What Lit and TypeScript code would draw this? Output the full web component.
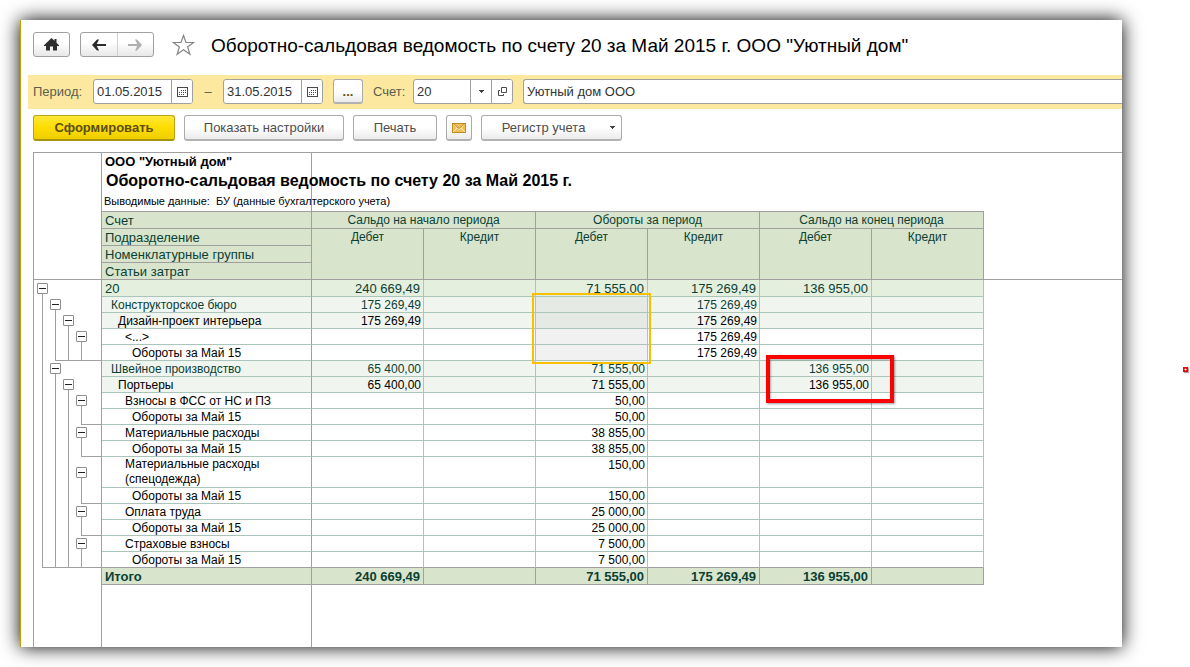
import { LitElement, html, css, svg, nothing } from "lit";
import { customElement } from "lit/decorators.js";
import { classMap } from "lit/directives/class-map.js";

type Kind = "account" | "group" | "subgroup" | "plain" | "total";

interface Row {
  kind: Kind;
  level: number;
  name: string;
  /** One sign per outline level: "b" toggle, "l" guide line, "e" guide line that ends here, "." nothing. */
  tree: string;
  cells: [string, string, string, string, string, string];
  tall?: boolean;
  picked?: boolean;
  mark?: "selection" | "callout";
}

const ROWS: Row[] = [
  { kind: "account", level: 0, name: "20", tree: "b...", cells: ["240 669,49", "", "71 555,00", "175 269,49", "136 955,00", ""] },
  { kind: "group", level: 1, name: "Конструкторское бюро", tree: "lb..", cells: ["175 269,49", "", "", "175 269,49", "", ""], picked: true, mark: "selection" },
  { kind: "subgroup", level: 2, name: "Дизайн-проект интерьера", tree: "llb.", cells: ["175 269,49", "", "", "175 269,49", "", ""], picked: true },
  { kind: "plain", level: 3, name: "<...>", tree: "lllb", cells: ["", "", "", "175 269,49", "", ""], picked: true },
  { kind: "plain", level: 4, name: "Обороты за Май 15", tree: "leee", cells: ["", "", "", "175 269,49", "", ""], picked: true },
  { kind: "group", level: 1, name: "Швейное производство", tree: "lb..", cells: ["65 400,00", "", "71 555,00", "", "136 955,00", ""], mark: "callout" },
  { kind: "subgroup", level: 2, name: "Портьеры", tree: "llb.", cells: ["65 400,00", "", "71 555,00", "", "136 955,00", ""] },
  { kind: "plain", level: 3, name: "Взносы в ФСС от НС и ПЗ", tree: "lllb", cells: ["", "", "50,00", "", "", ""] },
  { kind: "plain", level: 4, name: "Обороты за Май 15", tree: "llle", cells: ["", "", "50,00", "", "", ""] },
  { kind: "plain", level: 3, name: "Материальные расходы", tree: "lllb", cells: ["", "", "38 855,00", "", "", ""] },
  { kind: "plain", level: 4, name: "Обороты за Май 15", tree: "llle", cells: ["", "", "38 855,00", "", "", ""] },
  { kind: "plain", level: 3, name: "Материальные расходы (спецодежда)", tree: "lllb", cells: ["", "", "150,00", "", "", ""], tall: true },
  { kind: "plain", level: 4, name: "Обороты за Май 15", tree: "llle", cells: ["", "", "150,00", "", "", ""] },
  { kind: "plain", level: 3, name: "Оплата труда", tree: "lllb", cells: ["", "", "25 000,00", "", "", ""] },
  { kind: "plain", level: 4, name: "Обороты за Май 15", tree: "llle", cells: ["", "", "25 000,00", "", "", ""] },
  { kind: "plain", level: 3, name: "Страховые взносы", tree: "lllb", cells: ["", "", "7 500,00", "", "", ""] },
  { kind: "plain", level: 4, name: "Обороты за Май 15", tree: "eeee", cells: ["", "", "7 500,00", "", "", ""] },
  { kind: "total", level: 0, name: "Итого", tree: "....", cells: ["240 669,49", "", "71 555,00", "175 269,49", "136 955,00", ""] },
];

const calendarIcon = html`<svg width="11" height="10" viewBox="0 0 11 10" aria-hidden="true">
  <rect x=".5" y=".5" width="10" height="9" fill="#fff" stroke="#4a4a4a" />
  ${[2, 4, 6, 8].map((x) => [3, 5, 7].map((y) =>
    (x === 2 && y === 3) || (x === 8 && y === 7) ? nothing : svg`<rect x=${x} y=${y} width="1" height="1" fill="#4a4a4a" />`))}
</svg>`;

const caretIcon = html`<svg width="5" height="3" viewBox="0 0 5 3" aria-hidden="true"><path d="M0 0h5v1H4v1H3v1H2V2H1V1H0z" fill="#444" /></svg>`;

@customElement("report-toolbar")
export class ReportToolbar extends LitElement {
  static styles = css`
    :host { display: block; color: #4d4d4d; font: 13px/16px "Liberation Sans", Arial, sans-serif; }
    button, input { font: inherit; color: inherit; margin: 0; padding: 0; box-sizing: border-box; }
    button { display: flex; align-items: center; justify-content: center; }
    .head { display: flex; align-items: center; height: 25px; padding: 12px 12px 18px; }
    .btn {
      height: 26px; border: 1px solid #ababab; border-bottom: 2px solid #b2b2b2; border-radius: 3px;
      background: linear-gradient(#fff 50%, #ebebeb);
    }
    .head .btn, .nav { height: 25px; border: 1px solid #a0a0a0; border-radius: 3px; background: linear-gradient(#fff 40%, #e8e8e8); }
    .home { width: 37px; }
    .nav { display: flex; box-sizing: border-box; width: 74px; margin-left: 10px; }
    .nav button { flex: 1; border: 0; background: none; }
    .nav button + button { border-left: 1px solid #cfcfcf; }
    .star { width: 23px; height: 23px; margin: 0 16px 0 18px; border: 0; background: none; }
    h1 { margin: 0; padding-top: 2px; font-size: 19px; line-height: 24px; font-weight: 400; color: #000; white-space: nowrap; }
    .band { display: flex; align-items: flex-start; height: 25px; margin-left: 7px; padding: 4px 0 5px 5px; background: #fce99f; }
    .band label, .dash { line-height: 25px; color: #5c5c50; }
    .period-label { width: 60px; }
    .account-label { width: 40px; margin-left: 10px; }
    .dash { width: 30px; text-align: center; }
    .field {
      display: flex; box-sizing: border-box; width: 100px; height: 25px; overflow: hidden;
      border: 1px solid #a0a0a0; border-radius: 3px; background: #fff; color: #333;
    }
    .field input { flex: 1; min-width: 0; padding-left: 3px; border: 0; outline: 0; background: none; }
    .field button { width: 21px; border: 0; border-left: 1px solid #a0a0a0; background: #fff; }
    .more { width: 30px; height: 25px; margin-left: 10px; padding-top: 2px; color: #6b4c10; font-weight: 700; }
    .org { flex: 1; margin-left: 10px; border-right: 0; border-radius: 3px 0 0 3px; }
    .actions { display: flex; gap: 9px; padding: 6px 12px 11px; }
    .run {
      width: 142px; font-weight: 700; color: #5c4d13; border-color: #b8a417; border-bottom-color: #a8930c;
      background: linear-gradient(#ffe838, #fddd00 50%, #efcf00);
    }
    .settings { width: 160px; }
    .print { width: 84px; }
    .mail { width: 26px; }
    .register { width: 141px; gap: 25px; padding-left: 14px; }
  `;

  private dateField(id: string, label: string, value: string) {
    return html`<div class="field">
      <input id=${id} type="text" aria-label=${label} .value=${value} />
      <button type="button" aria-label="Выбрать дату">${calendarIcon}</button>
    </div>`;
  }

  render() {
    return html`
      <header class="head">
        <button type="button" class="btn home" aria-label="Домой">
          <svg width="15" height="13" viewBox="0 0 15 13" aria-hidden="true"><path d="M7.500 0L10.500 2.800V1h2v3.700L15 7.200V8H13V12.500H9V8.500H6v4H2V8H0V7.200z" fill="#2f2f2f" /></svg>
        </button>
        <div class="nav">
          <button type="button" aria-label="Назад">
            <svg width="14" height="12" viewBox="0 0 14 12" aria-hidden="true"><path d="M0 6L5 .5H7L4.800 5H14V7H4.800L7 11.500H5z" fill="#2b2b2b" /></svg>
          </button>
          <button type="button" aria-label="Вперед">
            <svg width="14" height="12" viewBox="0 0 14 12" aria-hidden="true"><path d="M14 6L9 .5H7L9.200 5H0V7H9.200L7 11.500H9z" fill="#b0b0b0" /></svg>
          </button>
        </div>
        <button type="button" class="star" aria-label="В избранное">
          <svg width="23" height="22" viewBox="0 0 23 22" aria-hidden="true"><path d="M11.500 1.500L14 8.500H21.500L15.600 12.900 17.900 20.300 11.500 15.800 5.100 20.300 7.400 12.900 1.500 8.500H9z" fill="#fff" stroke="#858585" stroke-width="1.200" /></svg>
        </button>
        <h1>Оборотно-сальдовая ведомость по счету 20 за Май 2015 г. ООО "Уютный дом"</h1>
      </header>
      <div class="band">
        <label class="period-label" for="from">Период:</label>
        ${this.dateField("from", "Начало периода", "01.05.2015")}
        <span class="dash">–</span>
        ${this.dateField("to", "Конец периода", "31.05.2015")}
        <button type="button" class="btn more" aria-label="Выбрать период">...</button>
        <label class="account-label" for="account">Счет:</label>
        <div class="field">
          <input id="account" type="text" .value=${"20"} />
          <button type="button" aria-label="Выбрать из списка">${caretIcon}</button>
          <button type="button" aria-label="Открыть">
            <svg width="9" height="9" viewBox="0 0 9 9" aria-hidden="true"><path d="M3.500 .5h5v5h-5zM2 3.500H.5v5h5V7" fill="none" stroke="#4a4a4a" /></svg>
          </button>
        </div>
        <div class="field org"><input type="text" aria-label="Организация" .value=${"Уютный дом ООО"} /></div>
      </div>
      <div class="actions">
        <button type="button" class="btn run">Сформировать</button>
        <button type="button" class="btn settings">Показать настройки</button>
        <button type="button" class="btn print">Печать</button>
        <button type="button" class="btn mail" aria-label="Отправить по почте">
          <svg width="14" height="10" viewBox="0 0 14 10" aria-hidden="true">
            <rect x=".5" y=".5" width="13" height="9" fill="#f0bf55" stroke="#c08a24" />
            <path d="M1 1L7 6.500 13 1M1 9L5 5M13 9L9 5" fill="none" stroke="#fff0c4" />
            <path d="M1 .5L7 5.500 13 .5" fill="none" stroke="#b67d1c" stroke-width=".8" />
          </svg>
        </button>
        <button type="button" class="btn register" aria-haspopup="menu"><span>Регистр учета</span>${caretIcon}</button>
      </div>
    `;
  }
}

@customElement("report-sheet")
export class ReportSheet extends LitElement {
  static styles = css`
    :host {
      --line: #a0a0a0; --soft: #aac5ba;
      display: flex; flex-direction: column; margin-left: 12px; overflow: hidden;
      border: 1px solid var(--line); border-width: 1px 0 0 1px;
      font: 12px/14px "Liberation Sans", Arial, sans-serif; color: #000;
    }
    table { width: 100%; table-layout: fixed; border-collapse: separate; border-spacing: 0; }
    .c-tree { width: 68px; }
    .c-name { width: 210px; }
    .c-sum { width: 112px; }
    th, td { box-sizing: border-box; padding: 0; font-weight: 400; vertical-align: top; text-align: left; }
    .gutter { border-right: 1px solid var(--line); }
    .corner, .rest { border-bottom: 1px solid var(--line); }
    .titles { height: 59px; border: 1px solid var(--line); border-width: 0 1px 1px 0; white-space: nowrap; }
    .over { border-bottom: 1px solid var(--line); }
    .titles p, .titles h2 { margin: 0; line-height: 15px; }
    .titles .firm { padding: 1px 0 0 3px; font-size: 13px; font-weight: 700; }
    .titles h2 { padding: 1px 0 0 4px; font-size: 16px; line-height: 22px; font-weight: 700; }
    .titles .note { padding: 2px 0 0 2px; font-size: 11px; white-space: pre; }
    .h { height: 17px; border: 1px solid var(--line); border-width: 0 1px 1px 0; background: #d8e5cc; color: #0b4034; }
    .h-name { padding: 1px 0 0 3px; font-size: 13px; line-height: 15px; }
    .h-sum { text-align: center; line-height: 16px; }

    .name, .sum { height: 16px; padding-top: 1px; border: 1px solid var(--soft); border-width: 0 1px 1px 0; }
    .name { border-right-color: var(--line); }
    .sum { position: relative; padding-right: 2px; text-align: right; }
    .account .name, .account .sum { height: 17px; background: #e4efdd; color: #0b4034; font-size: 13px; line-height: 15px; }
    .account .sum, .total .sum { padding-right: 3px; }
    .group .name, .group .sum { background: #f0f5ef; color: #0b4034; }
    .subgroup .name, .subgroup .sum { background: #f0f5ef; }
    .total .name, .total .sum {
      height: 17px; border-color: var(--line); background: #d8e5cc; color: #0b4034;
      font-size: 13px; line-height: 15px; font-weight: 700;
    }
    .last .name, .last .sum { border-bottom-color: var(--line); }
    .tall .name { height: 31px; padding-top: 0; padding-right: 40px; line-height: 15px; }
    .l0 { padding-left: 3px; }
    .l1 { padding-left: 9px; }
    .l2 { padding-left: 16px; }
    .l3 { padding-left: 23px; }
    .l4 { padding-left: 30px; }
    .group .picked, .subgroup .picked { background: #e5eae4; }
    .plain .picked { background: #f1f1f1; }

    .tree { display: flex; height: 16px; padding-left: 3px; }
    .account .tree, .total .tree { height: 17px; }
    .tall .tree { height: 31px; }
    .slot { box-sizing: border-box; display: flex; flex-direction: column; align-items: center; width: 11px; margin-right: 2px; padding-top: 2px; }
    .account .slot { padding-top: 3px; }
    .tall .slot { padding-top: 10px; }
    .tree .guide { padding-top: 0; }
    .stem { flex: 1; width: 1px; background: var(--line); }
    .tree .end { width: 13px; margin: 0 -5px 0 5px; align-items: flex-start; padding-top: 0; border-bottom: 1px solid var(--line); }
    .tree .end + .end { margin-left: 5px; }
    .tail { flex: 1; }
    .end + .tail { margin-left: 5px; border-bottom: 1px solid var(--line); }
    .toggle {
      display: flex; align-items: center; justify-content: center; box-sizing: border-box; width: 11px; height: 11px;
      margin: 0; padding: 0; border: 1px solid #8e8e8e; border-radius: 1px; background: #fff;
    }
    .dash { width: 7px; height: 1px; background: #222; }

    .selection, .callout { position: absolute; z-index: 1; box-sizing: border-box; pointer-events: none; }
    .selection { left: -4px; top: -4px; width: 119px; height: 71px; border: 2px solid #f9bf00; }
    .callout { left: 6px; top: -6px; width: 128px; height: 48px; border: 4px solid #f00; box-shadow: 1px 1px 2px rgba(0, 0, 0, .4), inset 1px 1px 2px rgba(0, 0, 0, .3); }

    .empty { display: grid; grid-template-columns: 68px 210px 1fr; flex: 1; min-height: 40px; }
    .empty-cell { border-right: 1px solid var(--line); }
  `;

  private slotFor(sign: string) {
    if (sign === "b") {
      return html`<div class="slot"><button type="button" class="toggle" aria-label="Свернуть"><span class="dash"></span></button><span class="stem"></span></div>`;
    }
    if (sign === "l") return html`<div class="slot guide"><span class="stem"></span></div>`;
    if (sign === "e") return html`<div class="slot end"><span class="stem"></span></div>`;
    return html`<div class="slot"></div>`;
  }

  private row(r: Row, i: number) {
    const cls = { [r.kind]: true, tall: !!r.tall, last: ROWS[i + 1]?.kind === "total" };
    return html`<tr class=${classMap(cls)}>
      <td class="gutter"><div class="tree">${[...r.tree].map((s) => this.slotFor(s))}<div class="tail"></div></div></td>
      <th scope="row" class="name l${r.level}">${r.name}</th>
      ${r.cells.map((value, c) => html`<td class=${classMap({ sum: true, picked: !!r.picked && c === 2 })}>${value}${
        r.mark === "selection" && c === 2 ? html`<span class="selection"></span>` : nothing}${
        r.mark === "callout" && c === 4 ? html`<span class="callout"></span>` : nothing}</td>`)}
      <td></td>
    </tr>`;
  }

  render() {
    return html`
      <table>
        <colgroup>
          <col class="c-tree" /><col class="c-name" />
          ${[0, 1, 2, 3, 4, 5].map(() => html`<col class="c-sum" />`)}
          <col />
        </colgroup>
        <thead>
          <tr>
            <td class="gutter corner" rowspan="5"></td>
            <td class="titles">
              <p class="firm">ООО "Уютный дом"</p>
              <h2>Оборотно-сальдовая ведомость по счету 20 за Май 2015 г.</h2>
              <p class="note">Выводимые данные:  БУ (данные бухгалтерского учета)</p>
            </td>
            <td class="over" colspan="6"></td>
            <td class="rest" rowspan="5"></td>
          </tr>
          <tr>
            <th class="h h-name">Счет</th>
            <th class="h h-sum" colspan="2">Сальдо на начало периода</th>
            <th class="h h-sum" colspan="2">Обороты за период</th>
            <th class="h h-sum" colspan="2">Сальдо на конец периода</th>
          </tr>
          <tr>
            <th class="h h-name">Подразделение</th>
            ${[0, 1, 2, 3, 4, 5].map((n) => html`<th class="h h-sum" rowspan="3">${n % 2 ? "Кредит" : "Дебет"}</th>`)}
          </tr>
          <tr><th class="h h-name">Номенклатурные группы</th></tr>
          <tr><th class="h h-name">Статьи затрат</th></tr>
        </thead>
        <tbody>${ROWS.map((r, i) => this.row(r, i))}</tbody>
      </table>
      <div class="empty"><div class="empty-cell"></div><div class="empty-cell"></div></div>
    `;
  }
}

@customElement("app-root")
export class AppRoot extends LitElement {
  static styles = css`
    :host { position: relative; display: flex; box-sizing: border-box; min-height: 100vh; padding: 20px 68px 20px 20px; background: #fff; overflow: hidden; }
    .window { display: flex; flex-direction: column; flex: 1; min-width: 0; border-left: 1px solid #c0a000; background: #fff; box-shadow: 0 0 18px #000; }
    .sheet { flex: 1; }
    .marker { position: absolute; top: 367px; right: 2px; width: 5px; height: 5px; box-shadow: 1px 1px 1px rgba(0, 0, 0, .35); }
    .marker svg { display: block; }
  `;

  render() {
    return html`
      <main class="window">
        <report-toolbar></report-toolbar>
        <report-sheet class="sheet"></report-sheet>
      </main>
      <div class="marker"><svg width="5" height="5" viewBox="0 0 5 5" aria-hidden="true"><path d="M0 0h5v5H0z" fill="#f00" /><path d="M2 1h1v3H2zM1 2h3v1H1z" fill="#ff8a8a" /><path d="M2 2h1v1H2z" fill="#fff" /></svg></div>
    `;
  }
}
